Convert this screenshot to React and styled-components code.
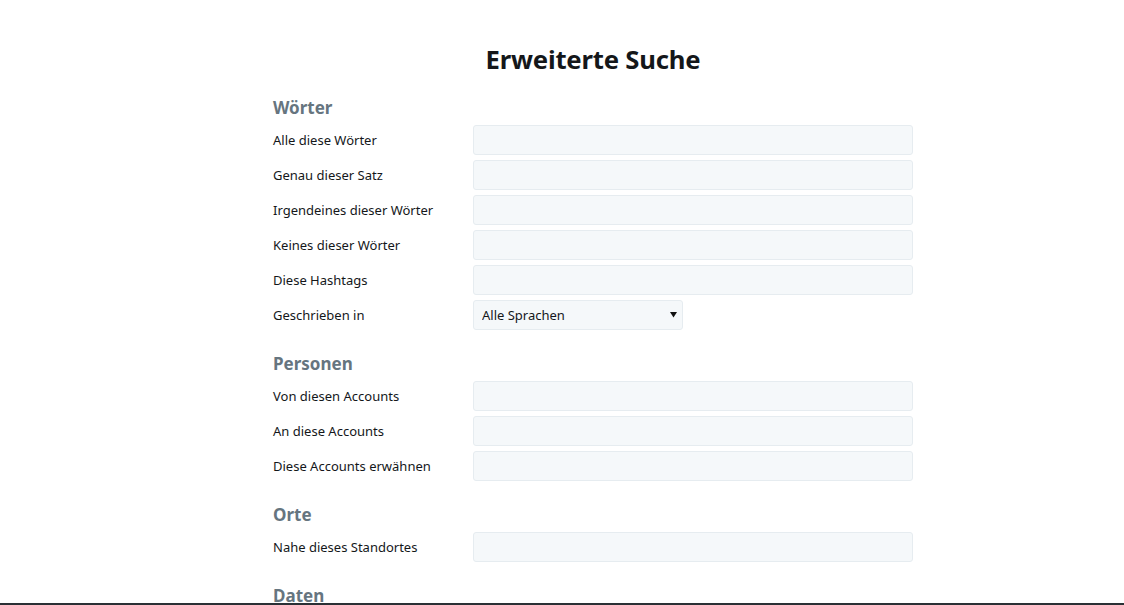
import React from "react";
import styled, { createGlobalStyle } from "styled-components";

const Global = createGlobalStyle`
  html, body { margin: 0; padding: 0; background: #fff; }
  body { font-family: "Noto Sans", "Open Sans", "DejaVu Sans", sans-serif; color: #14171a; }
  * { box-sizing: border-box; }
`;

const Page = styled.main`
  width: 640px;
  margin-left: 273px;
  padding-top: 41px;
`;

const Title = styled.h1`
  margin: 0 0 18px;
  text-align: center;
  font-size: 25.7px;
  line-height: 38px;
  font-weight: 700;
  color: #14171a;
  letter-spacing: -0.2px;
`;

const Section = styled.section`
  margin-bottom: 23px;
`;

const SectionTitle = styled.h2`
  margin: 0 0 6px;
  font-size: 17px;
  line-height: 22px;
  font-weight: 700;
  color: #66757f;
`;

const Rows = styled.div`
  display: flex;
  flex-direction: column;
  gap: 5px;
`;

const Row = styled.label`
  display: grid;
  grid-template-columns: 200px 1fr;
  align-items: center;
  height: 30px;
`;

const LabelText = styled.span`
  font-size: 13px;
  color: #14171a;
`;

const Input = styled.input`
  width: 440px;
  height: 30px;
  background: #f5f8fa;
  border: 1px solid #e6ecf0;
  border-radius: 3px;
  padding: 0 8px;
  font: inherit;
  outline: none;
`;

const SelectWrap = styled.div`
  position: relative;
  width: 210px;
  height: 30px;
`;

const Select = styled.select`
  appearance: none;
  -webkit-appearance: none;
  width: 100%;
  height: 30px;
  background: #f5f8fa;
  border: 1px solid #e6ecf0;
  border-radius: 3px;
  padding: 0 20px 0 8px;
  font-family: inherit;
  font-size: 13px;
  color: #14171a;
  outline: none;
`;

const Arrow = styled.svg`
  position: absolute;
  right: 6px;
  top: 11px;
  width: 7px;
  height: 7px;
  pointer-events: none;
`;

const BottomBar = styled.div`
  position: fixed;
  left: 0;
  right: 0;
  bottom: 0;
  height: 2px;
  background: #2a3035;
`;

const sections = [
  {
    title: "Wörter",
    fields: [
      "Alle diese Wörter",
      "Genau dieser Satz",
      "Irgendeines dieser Wörter",
      "Keines dieser Wörter",
      "Diese Hashtags",
      { label: "Geschrieben in", select: "Alle Sprachen" },
    ],
  },
  {
    title: "Personen",
    fields: ["Von diesen Accounts", "An diese Accounts", "Diese Accounts erwähnen"],
  },
  { title: "Orte", fields: ["Nahe dieses Standortes"] },
  { title: "Daten", fields: [] },
];

export default function App() {
  return (
    <>
      <Global />
      <Page>
        <Title>Erweiterte Suche</Title>
        {sections.map((s) => (
          <Section key={s.title}>
            <SectionTitle>{s.title}</SectionTitle>
            <Rows>
              {s.fields.map((f) =>
                typeof f === "string" ? (
                  <Row key={f}>
                    <LabelText>{f}</LabelText>
                    <Input type="text" />
                  </Row>
                ) : (
                  <Row key={f.label}>
                    <LabelText>{f.label}</LabelText>
                    <SelectWrap>
                      <Select defaultValue={f.select}>
                        <option>{f.select}</option>
                      </Select>
                      <Arrow viewBox="0 0 7 7">
                        <path d="M0 1 H7 L3.5 6.5 Z" fill="#111" />
                      </Arrow>
                    </SelectWrap>
                  </Row>
                )
              )}
            </Rows>
          </Section>
        ))}
      </Page>
      <BottomBar />
    </>
  );
}
